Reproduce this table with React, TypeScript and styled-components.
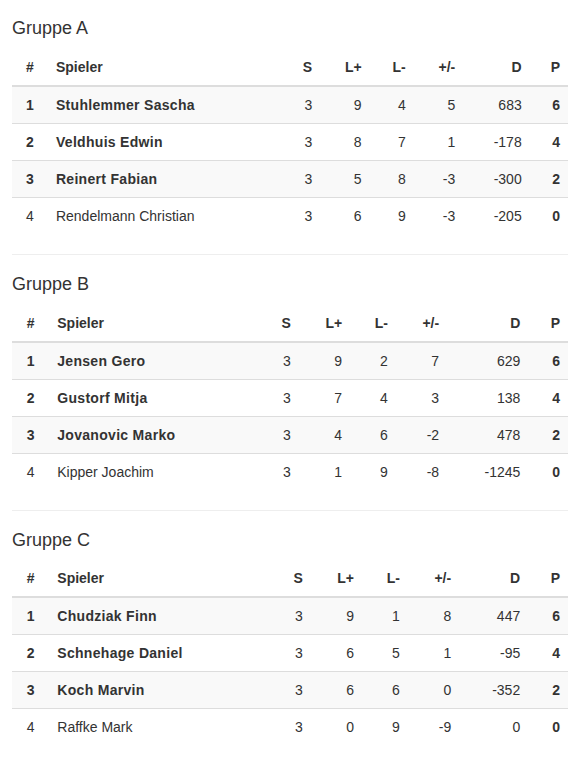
import React from "react";
import styled, { createGlobalStyle } from "styled-components";

const GlobalStyle = createGlobalStyle`
  html, body {
    margin: 0;
    padding: 0;
    background: #fff;
  }
  body {
    font-family: "Liberation Sans", Arial, Helvetica, sans-serif;
    font-size: 14px;
    line-height: 1.42857143;
    color: #333;
  }
`;

type Align = "left" | "center" | "right";

interface Row {
  rank: number;
  name: string;
  s: number;
  lp: number;
  lm: number;
  diff: number;
  d: number;
  p: number;
}

interface Group {
  title: string;
  rows: Row[];
}

const groups: Group[] = [
  {
    title: "Gruppe A",
    rows: [
      { rank: 1, name: "Stuhlemmer Sascha", s: 3, lp: 9, lm: 4, diff: 5, d: 683, p: 6 },
      { rank: 2, name: "Veldhuis Edwin", s: 3, lp: 8, lm: 7, diff: 1, d: -178, p: 4 },
      { rank: 3, name: "Reinert Fabian", s: 3, lp: 5, lm: 8, diff: -3, d: -300, p: 2 },
      { rank: 4, name: "Rendelmann Christian", s: 3, lp: 6, lm: 9, diff: -3, d: -205, p: 0 },
    ],
  },
  {
    title: "Gruppe B",
    rows: [
      { rank: 1, name: "Jensen Gero", s: 3, lp: 9, lm: 2, diff: 7, d: 629, p: 6 },
      { rank: 2, name: "Gustorf Mitja", s: 3, lp: 7, lm: 4, diff: 3, d: 138, p: 4 },
      { rank: 3, name: "Jovanovic Marko", s: 3, lp: 4, lm: 6, diff: -2, d: 478, p: 2 },
      { rank: 4, name: "Kipper Joachim", s: 3, lp: 1, lm: 9, diff: -8, d: -1245, p: 0 },
    ],
  },
  {
    title: "Gruppe C",
    rows: [
      { rank: 1, name: "Chudziak Finn", s: 3, lp: 9, lm: 1, diff: 8, d: 447, p: 6 },
      { rank: 2, name: "Schnehage Daniel", s: 3, lp: 6, lm: 5, diff: 1, d: -95, p: 4 },
      { rank: 3, name: "Koch Marvin", s: 3, lp: 6, lm: 6, diff: 0, d: -352, p: 2 },
      { rank: 4, name: "Raffke Mark", s: 3, lp: 0, lm: 9, diff: -9, d: 0, p: 0 },
    ],
  },
];

const Page = styled.div`
  padding: 9px 10px 0 12px;
`;

const GroupTitle = styled.h4`
  margin: 10px 0 10px;
  font-family: "Liberation Sans", Arial, Helvetica, sans-serif;
  font-size: 18px;
  font-weight: 500;
  line-height: 1.1;
  color: #333;
`;

const Table = styled.table`
  width: 100%;
  max-width: 100%;
  margin-bottom: 20px;
  border-collapse: collapse;
  border-spacing: 0;
  background-color: transparent;
`;

const HeadCell = styled.th<{ $align: Align }>`
  padding: 8px;
  line-height: 1.42857143;
  vertical-align: bottom;
  text-align: ${(p) => p.$align};
  font-weight: bold;
  border-top: 0;
  border-bottom: 2px solid #ddd;
`;

const BodyRow = styled.tr`
  &:nth-of-type(odd) {
    background-color: #f9f9f9;
  }
`;

const Cell = styled.td<{ $align: Align; $bold?: boolean }>`
  padding: 8px;
  line-height: 1.42857143;
  vertical-align: top;
  text-align: ${(p) => p.$align};
  font-weight: ${(p) => (p.$bold ? "bold" : "normal")};
  border-top: 1px solid #ddd;
`;

const NameCell = styled(Cell)`
  letter-spacing: ${(p) => (p.$bold ? "0.3px" : "0")};
`;

const Divider = styled.hr`
  margin: 20px 0;
  border: 0;
  border-top: 1px solid #eee;
  height: 0;
  box-sizing: content-box;
`;

const headers: { label: string; align: Align }[] = [
  { label: "#", align: "center" },
  { label: "Spieler", align: "left" },
  { label: "S", align: "right" },
  { label: "L+", align: "right" },
  { label: "L-", align: "right" },
  { label: "+/-", align: "right" },
  { label: "D", align: "right" },
  { label: "P", align: "right" },
];

function GroupTable({ group }: { group: Group }) {
  return (
    <>
      <GroupTitle>{group.title}</GroupTitle>
      <Table>
        <thead>
          <tr>
            {headers.map((h) => (
              <HeadCell key={h.label} $align={h.align}>
                {h.label}
              </HeadCell>
            ))}
          </tr>
        </thead>
        <tbody>
          {group.rows.map((r) => {
            const qualified = r.rank <= 3;
            return (
              <BodyRow key={r.rank}>
                <Cell $align="center" $bold={qualified}>{r.rank}</Cell>
                <NameCell $align="left" $bold={qualified}>{r.name}</NameCell>
                <Cell $align="right">{r.s}</Cell>
                <Cell $align="right">{r.lp}</Cell>
                <Cell $align="right">{r.lm}</Cell>
                <Cell $align="right">{r.diff}</Cell>
                <Cell $align="right">{r.d}</Cell>
                <Cell $align="right" $bold>{r.p}</Cell>
              </BodyRow>
            );
          })}
        </tbody>
      </Table>
      <Divider />
    </>
  );
}

export default function App() {
  return (
    <Page>
      <GlobalStyle />
      {groups.map((g) => (
        <GroupTable key={g.title} group={g} />
      ))}
    </Page>
  );
}
